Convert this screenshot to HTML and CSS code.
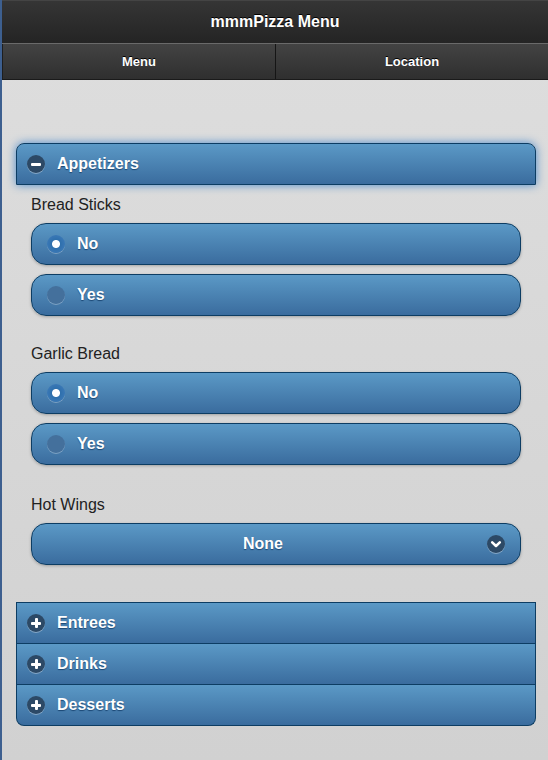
FILE: index.html
```html
<!DOCTYPE html>
<html>
<head>
<meta charset="utf-8">
<link rel="stylesheet" href="styles.css">
</head>
<body>
<div class="page">
  <header class="header">mmmPizza Menu</header>
  <nav class="navbar">
    <a class="nav-btn">Menu</a>
    <a class="nav-btn">Location</a>
  </nav>
  <main class="content">
    <section class="collapsible open">
      <div class="coll-head focus"><span class="icon minus"></span><span class="coll-title">Appetizers</span></div>
      <div class="coll-body">
        <div class="field">
          <div class="label">Bread Sticks</div>
          <div class="btn radio"><span class="ricon checked"></span><span class="btn-text">No</span></div>
          <div class="btn radio"><span class="ricon"></span><span class="btn-text">Yes</span></div>
        </div>
        <div class="field">
          <div class="label">Garlic Bread</div>
          <div class="btn radio"><span class="ricon checked"></span><span class="btn-text">No</span></div>
          <div class="btn radio"><span class="ricon"></span><span class="btn-text">Yes</span></div>
        </div>
        <div class="field last-field">
          <div class="label">Hot Wings</div>
          <div class="btn select"><span class="btn-text center">None</span>
            <span class="icon arrow"><svg viewBox="0 0 18 18" width="18" height="18"><path d="M5.2 7.4 L9 11 L12.8 7.4" fill="none" stroke="#fff" stroke-width="2.6" stroke-linecap="round" stroke-linejoin="round"/></svg></span>
          </div>
        </div>
      </div>
    </section>
    <section class="set">
      <div class="coll-head item"><span class="icon plus"></span><span class="coll-title">Entrees</span></div>
      <div class="coll-head item"><span class="icon plus"></span><span class="coll-title">Drinks</span></div>
      <div class="coll-head item last"><span class="icon plus"></span><span class="coll-title">Desserts</span></div>
    </section>
  </main>
</div>
</body>
</html>
```
FILE: styles.css
```css
html, body {
  margin: 0;
  padding: 0;
  height: 100%;
}
body {
  font-family: "Liberation Sans", Arial, Helvetica, sans-serif;
  background: #d8d8d8;
}
.page {
  min-height: 760px;
  border-left: 2px solid #3d5f8f;
  background: linear-gradient(#dedede, #d1d1d1);
  display: flex;
  flex-direction: column;
}
.header {
  height: 42px;
  border-top: 1px solid #444;
  background: linear-gradient(#353535, #242424);
  color: #fff;
  font-weight: bold;
  font-size: 16px;
  display: flex;
  align-items: center;
  justify-content: center;
  text-shadow: 0 -1px 0 #000;
}
.navbar {
  display: flex;
  height: 35px;
  border-top: 1px solid #6a6a6a;
  border-bottom: 1px solid #1a1a1a;
}
.nav-btn {
  flex: 1;
  display: flex;
  align-items: center;
  justify-content: center;
  color: #fff;
  font-weight: bold;
  font-size: 13px;
  background: linear-gradient(#434343, #2f2f2f);
  text-shadow: 0 -1px 0 #000;
  border-left: 1px solid #151515;
}
.nav-btn:first-child {
  border-left: 1px solid #1e1e1e;
}
.content {
  padding: 63px 12px 30px 14px;
  display: flex;
  flex-direction: column;
}
.coll-head {
  height: 40px;
  border: 1px solid #0d3d63;
  background: linear-gradient(#5b99c6, #3a6c9e);
  display: flex;
  align-items: center;
  color: #fff;
  font-weight: bold;
  font-size: 16px;
  text-shadow: 0 1px 1px #1a4673;
  box-sizing: border-box;
  padding-left: 10px;
}
.coll-head.focus {
  height: 42px;
  border-radius: 8px 8px 0 0;
  box-shadow: 0 0 10px #4a8acb;
}
.coll-title {
  margin-left: 12px;
}
.icon {
  width: 18px;
  height: 18px;
  border-radius: 50%;
  background: #2c4966;
  box-shadow: 0 1px 0 rgba(255,255,255,0.35);
  position: relative;
  flex: none;
}
.minus::before, .plus::before, .plus::after {
  content: "";
  position: absolute;
  background: #fff;
  border-radius: 1px;
}
.minus::before, .plus::before {
  left: 4px;
  top: 7.5px;
  width: 10px;
  height: 3px;
}
.plus::after {
  left: 7.5px;
  top: 4px;
  width: 3px;
  height: 10px;
}
.coll-body {
  padding: 10px 15px 0 15px;
}
.field {
  display: flex;
  flex-direction: column;
  gap: 9px;
  margin-bottom: 28px;
}
.field.last-field {
  padding-top: 2px;
  margin-bottom: 0;
}
.label {
  font-size: 16px;
  line-height: 20px;
  color: #222;
  margin-bottom: -1px;
}
.btn {
  height: 42px;
  box-sizing: border-box;
  border: 1px solid #0d3d63;
  border-radius: 15px;
  background: linear-gradient(#5b99c6, #3a6c9e);
  box-shadow: 0 1px 3px rgba(0,0,0,0.25);
  display: flex;
  align-items: center;
  color: #fff;
  font-weight: bold;
  font-size: 16px;
  text-shadow: 0 1px 1px #1a4673;
  padding-left: 15px;
  position: relative;
}
.ricon {
  width: 18px;
  height: 18px;
  border-radius: 50%;
  background: #44709c;
  box-shadow: 0 1px 0 rgba(255,255,255,0.3);
  flex: none;
}
.ricon.checked {
  background: radial-gradient(circle, #fff 0, #fff 3.5px, #2f70ad 4.5px, #3a78b6 9px);
}
.btn-text {
  margin-left: 12px;
}
.select {
  justify-content: center;
  padding-left: 0;
  padding-right: 26px;
}
.btn-text.center {
  margin-left: 0;
}
.icon.arrow {
  position: absolute;
  right: 15px;
  top: 11px;
}
.icon.arrow svg {
  display: block;
}
.set {
  margin-top: 37px;
  display: flex;
  flex-direction: column;
}
.set .coll-head {
  height: 41px;
  border-top: none;
}
.set .coll-head:first-child {
  border-top: 1px solid #0d3d63;
  height: 42px;
}
.set .coll-head.last {
  height: 41px;
  border-radius: 0 0 8px 8px;
}
```
